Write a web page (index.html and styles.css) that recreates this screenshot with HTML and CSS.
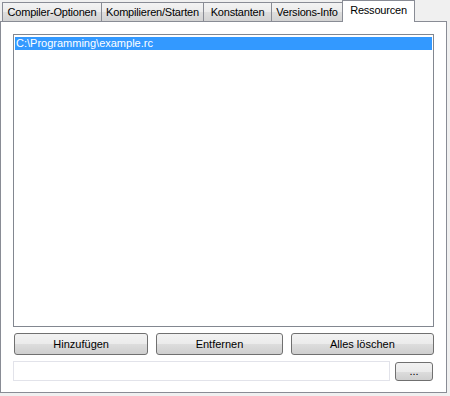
FILE: index.html
```html
<!DOCTYPE html>
<html lang="de">
<head>
    <meta charset="UTF-8">
    <title>Ressourcen</title>
    <link rel="stylesheet" href="styles.css">
</head>
<body>
    <div class="tabs">
        <div class="tab tab-compiler">Compiler-Optionen</div>
        <div class="tab tab-build">Kompilieren/Starten</div>
        <div class="tab tab-const">Konstanten</div>
        <div class="tab tab-version">Versions-Info</div>
        <div class="tab tab-res active">Ressourcen</div>
    </div>

    <div class="panel">
        <ul class="listbox">
            <li class="list-item selected">C:\Programming\example.rc</li>
        </ul>

        <div class="button-row">
            <button class="btn btn-add">Hinzufügen</button>
            <button class="btn btn-remove">Entfernen</button>
            <button class="btn btn-clear">Alles löschen</button>
        </div>

        <div class="file-row">
            <input type="text" class="file-field">
            <button class="btn btn-browse">...</button>
        </div>
    </div>
</body>
</html>
```

FILE: styles.css
```css
body {
    margin: 0;
    background: #f0f0f0;
    font-family: "Liberation Sans", Arial, sans-serif;
    font-size: 11px;
    color: #000;
    width: 450px;
    height: 396px;
    overflow: hidden;
}
.tabs {
    display: flex;
    align-items: flex-end;
    height: 21px;
    padding-left: 2px;
}
.tab {
    box-sizing: border-box;
    height: 19px;
    line-height: 18px;
    text-align: center;
    border: 1px solid #898c95;
    border-bottom: none;
    margin-right: -1px;
    background: linear-gradient(#f3f3f3, #ebebeb 50%, #dedede 50%, #d3d3d3);
    white-space: nowrap;
    letter-spacing: -0.2px;
}
.tab-compiler {
    width: 100px;
}
.tab-build {
    width: 103px;
}
.tab-const {
    width: 69px;
}
.tab-version {
    width: 72px;
}
.tab.active {
    position: relative;
    z-index: 1;
    width: 73px;
    height: 22px;
    line-height: 19px;
    margin-bottom: -1px;
    background: #fff;
}
.panel {
    width: 421px;
    height: 347px;
    margin-right: 2px;
    padding: 12px 12px 11px 12px;
    border: 1px solid #898c95;
    background: #fff;
    display: flex;
    flex-direction: column;
}
.listbox {
    list-style: none;
    margin: 0;
    padding: 2px 1px;
    height: 289px;
    border: 1px solid #828790;
    background: #fff;
}
.list-item {
    height: 13px;
    line-height: 13px;
    padding-left: 1px;
}
.list-item.selected {
    background: #3399ff;
    color: #fff;
}
.button-row {
    display: flex;
    gap: 8px;
    margin-top: 6px;
    padding-left: 1px;
}
.btn {
    height: 22px;
    padding: 0;
    border: 1px solid #707070;
    border-radius: 3px;
    background: linear-gradient(#f2f2f2, #ebebeb 50%, #dddddd 50%, #cfcfcf);
    font-family: "Liberation Sans", Arial, sans-serif;
    font-size: 11px;
    font-weight: normal;
    color: #000;
}
.btn-add {
    width: 135px;
}
.btn-remove {
    width: 127px;
}
.btn-clear {
    width: 144px;
}
.file-row {
    display: flex;
    justify-content: space-between;
    align-items: center;
    margin-top: 6px;
}
.file-field {
    width: 377px;
    height: 20px;
    box-sizing: border-box;
    margin: 0;
    border: 1px solid #e2e3ea;
    background: #fff;
}
.btn-browse {
    width: 38px;
    height: 19px;
    margin-right: 1px;
    line-height: 12px;
}
```
